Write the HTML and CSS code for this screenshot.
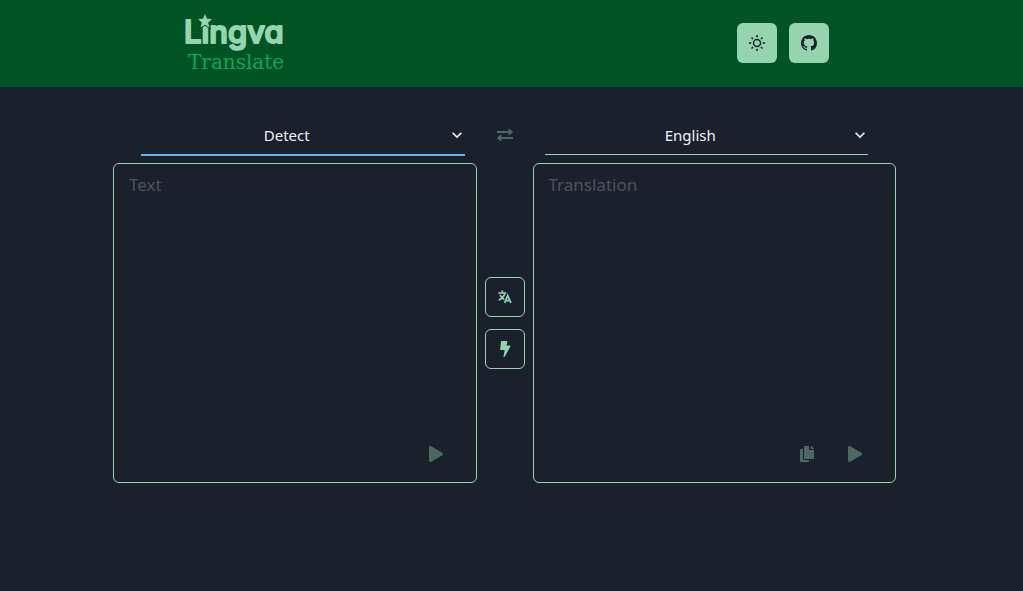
FILE: index.html
```html
<!DOCTYPE html>
<html lang="en">
<head>
  <meta charset="utf-8">
  <meta name="viewport" content="width=device-width, initial-scale=1">
  <title>Lingva Translate</title>
  <link rel="stylesheet" href="styles.css">
</head>
<body>
  <header class="header">
    <div class="header-inner">
      <a class="logo" href="#" aria-label="Lingva Translate">
        <svg width="110" height="64" viewBox="0 0 110 64">
          <text class="logo-name" x="4" y="32">Lingva</text>
          <path class="logo-star" d="M25 3l2 4.700 5 .4-3.800 3.300 1.200 5-4.400-2.700-4.400 2.700 1.200-5L18 8.100l5-.4z"/>
          <text class="logo-sub" x="8" y="58">Translate</text>
        </svg>
      </a>
      <div class="header-actions">
        <button class="icon-button solid" type="button" aria-label="Toggle color mode">
          <svg width="16" height="16" viewBox="0 0 16 16" fill="none" stroke="currentColor" stroke-width="1.500">
            <circle cx="8" cy="8" r="3.500"/>
            <path d="M8 0v2.300M8 13.700V16M0 8h2.300M13.700 8H16M2.500 2.500L4 4M12 12l1.500 1.500M2.500 13.500L4 12M12 4l1.500-1.500"/>
          </svg>
        </button>
        <a class="icon-button solid" href="#" aria-label="GitHub">
          <svg width="16" height="16" viewBox="0 0 16 16" fill="currentColor">
            <path d="M8 0C3.58 0 0 3.58 0 8c0 3.54 2.29 6.53 5.47 7.59.4.07.55-.17.55-.38 0-.19-.01-.82-.01-1.490-2.010.37-2.530-.49-2.690-.94-.09-.23-.48-.94-.82-1.130-.28-.15-.68-.52-.01-.53.63-.01 1.080.58 1.230.82.72 1.210 1.870.87 2.330.66.07-.52.28-.87.51-1.070-1.780-.2-3.640-.89-3.640-3.950 0-.87.31-1.590.82-2.150-.08-.2-.36-1.020.08-2.120 0 0 .67-.21 2.200.82.64-.18 1.320-.27 2-.27s1.360.09 2 .27c1.530-1.040 2.200-.82 2.200-.82.44 1.100.16 1.920.08 2.120.51.56.82 1.270.82 2.150 0 3.070-1.870 3.750-3.650 3.950.29.25.54.73.54 1.480 0 1.070-.01 1.930-.01 2.200 0 .21.15.46.55.38A8.010 8.010 0 0 0 16 8c0-4.420-3.580-8-8-8z"/>
          </svg>
        </a>
      </div>
    </div>
  </header>

  <main class="main">
    <div class="languages">
      <div class="select-wrap">
        <select class="select active" aria-label="Source language">
          <option>Detect</option>
          <option>English</option>
        </select>
        <svg class="chevron" width="20" height="20" viewBox="0 0 24 24" fill="currentColor"><path d="M16.590 8.590L12 13.170 7.410 8.590 6 10l6 6 6-6z"/></svg>
      </div>
      <button class="icon-button ghost" type="button" aria-label="Switch languages" disabled>
        <svg width="16" height="16" viewBox="0 0 16 16" fill="currentColor">
          <path d="M0 4h11.500V2.600c0-.7.7-1 1.200-.5L15.700 4.500c.4.300.4.700 0 1L12.700 7.900c-.5.500-1.200.2-1.200-.5V6H0zM16 10H4.500V8.600c0-.7-.7-1-1.200-.5L.3 10.500c-.4.300-.4.700 0 1l3 2.400c.5.500 1.200.2 1.200-.5V12H16z"/>
        </svg>
      </button>
      <div class="select-wrap">
        <select class="select" aria-label="Target language">
          <option>English</option>
          <option>Spanish</option>
        </select>
        <svg class="chevron" width="20" height="20" viewBox="0 0 24 24" fill="currentColor"><path d="M16.590 8.590L12 13.170 7.410 8.590 6 10l6 6 6-6z"/></svg>
      </div>
    </div>

    <div class="panels">
      <div class="panel">
        <textarea class="textarea" aria-label="Translation query" placeholder="Text"></textarea>
        <div class="panel-actions">
          <button class="icon-button ghost" type="button" aria-label="Play text" disabled>
            <svg width="16" height="16" viewBox="0 0 16 16" fill="currentColor"><path d="M1 1.500C1 .3 2.200-.2 3.200.3l11.100 6.500c.9.600.9 1.800 0 2.400L3.200 15.700c-1 .5-2.200 0-2.200-1.200z"/></svg>
          </button>
        </div>
      </div>

      <div class="middle">
        <button class="icon-button outline" type="button" aria-label="Translate">
          <svg width="16" height="16" viewBox="0 0 16 16" fill="none" stroke="currentColor" stroke-width="1.700">
            <path d="M1.300 4h8M5.300 1.600V4M8 4C7.200 7.200 4.800 9.600 1.800 11M3 5.800c.8 2 2.300 3.500 4.300 4.600M7.600 14l3.100-7.600L13.900 14M8.700 11.700h4.100"/>
          </svg>
        </button>
        <button class="icon-button outline" type="button" aria-label="Auto translate">
          <svg width="16" height="16" viewBox="0 0 16 16" fill="currentColor"><path d="M4.700 0h5c.5 0 .8.500.7.900L9.400 4.500h3.300c.6 0 .9.600.6 1.100L7.800 15.600c-.5.800-1.500.4-1.300-.5L7.700 9H3.800c-.5 0-.8-.4-.7-.8L4 .7c0-.4.300-.7.700-.7z"/></svg>
        </button>
      </div>

      <div class="panel">
        <textarea class="textarea" aria-label="Translation result" placeholder="Translation" readonly></textarea>
        <div class="panel-actions">
          <button class="icon-button ghost" type="button" aria-label="Copy to clipboard" disabled>
            <svg width="16" height="16" viewBox="0 0 16 16" fill="currentColor"><path d="M10 14v1.200c0 .5-.3.800-.8.800H1.800c-.5 0-.8-.3-.8-.8V3.800c0-.5.300-.8.800-.8H4v9.200c0 1 .8 1.800 1.800 1.800zM10 3.200V0H5.800C5.300 0 5 .3 5 .8v11.400c0 .5.300.8.800.8h8.400c.5 0 .8-.3.800-.8V4h-4.200c-.4 0-.8-.4-.8-.8zM14.800 2.400L12.600.2c-.1-.1-.3-.2-.6-.2h-.2v3H15v-.2c0-.1-.1-.3-.2-.4z"/></svg>
          </button>
          <button class="icon-button ghost" type="button" aria-label="Play translation" disabled>
            <svg width="16" height="16" viewBox="0 0 16 16" fill="currentColor"><path d="M1 1.500C1 .3 2.200-.2 3.200.3l11.100 6.500c.9.600.9 1.800 0 2.400L3.200 15.700c-1 .5-2.200 0-2.200-1.200z"/></svg>
          </button>
        </div>
      </div>
    </div>
  </main>
</body>
</html>
```

FILE: styles.css
```css
:root {
  --page: #1a202c;
  --header: #005423;
  --mint: #96d4b0;
  --logo-sub: #0fa457;
  --focus: #63b3ed;
  --muted: #505259;
}

* {
  box-sizing: border-box;
}

body {
  margin: 0;
  min-height: 100vh;
  background: var(--page);
  color: #f2f3f4;
  font-family: "Noto Sans", "Open Sans", sans-serif;
  font-size: 15px;
  line-height: 24px;
}

.header {
  background: var(--header);
  padding: 11px 14px 12px 0;
}

.header-inner {
  display: flex;
  align-items: center;
  justify-content: space-between;
  max-width: 649px;
  margin: 0 auto;
}

.logo,
.logo svg {
  display: block;
}

.logo-name {
  font: 500 31px Inter, sans-serif;
  font-feature-settings: "cv11";
  fill: var(--mint);
  stroke: var(--mint);
  stroke-width: 2px;
  stroke-linejoin: round;
}

.logo-star {
  fill: var(--mint);
  stroke: var(--header);
  stroke-width: 2px;
  paint-order: stroke;
}

.logo-sub {
  font: 20px "DejaVu Serif", serif;
  fill: var(--logo-sub);
}

.header-actions {
  display: flex;
  gap: 12px;
}

.icon-button {
  display: flex;
  align-items: center;
  justify-content: center;
  width: 40px;
  height: 40px;
  padding: 0;
  border: 0;
  border-radius: 6px;
  background: transparent;
  color: var(--mint);
}

.solid {
  background: var(--mint);
  color: var(--page);
}

.outline {
  border: 1px solid var(--mint);
}

.ghost:disabled {
  opacity: 0.4;
}

.main {
  padding: 28px 14px 28px 0;
}

.languages,
.panels {
  display: grid;
  grid-template-columns: 1fr 40px 1fr;
  max-width: 783px;
  margin: 0 auto;
}

.languages {
  gap: 20px;
  padding: 0 28px;
  margin-bottom: 8px;
}

.select-wrap {
  position: relative;
}

.select {
  width: 100%;
  height: 40px;
  padding: 0 32px 0 0;
  appearance: none;
  border: 0;
  border-bottom: 1px solid var(--mint);
  border-radius: 0;
  outline: 0;
  background: transparent;
  color: inherit;
  font: inherit;
  text-align: center;
  text-align-last: center;
}

.active {
  border-color: var(--focus);
  box-shadow: 0 1px 0 0 var(--focus);
}

.chevron {
  position: absolute;
  top: 10px;
  right: -2px;
  pointer-events: none;
}

.panels {
  gap: 8px;
}

.panel {
  position: relative;
  min-width: 0;
}

.textarea {
  display: block;
  width: 100%;
  height: 320px;
  padding: 8px 15px;
  resize: none;
  border: 1px solid var(--mint);
  border-radius: 6px;
  outline: 0;
  background: transparent;
  color: inherit;
  font: inherit;
  font-size: 17px;
  line-height: 25px;
}

.textarea::placeholder {
  color: var(--muted);
  opacity: 1;
}

.panel-actions {
  position: absolute;
  right: 21px;
  bottom: 9px;
  display: flex;
  gap: 8px;
}

.middle {
  display: flex;
  flex-direction: column;
  justify-content: center;
  gap: 12px;
}
```
